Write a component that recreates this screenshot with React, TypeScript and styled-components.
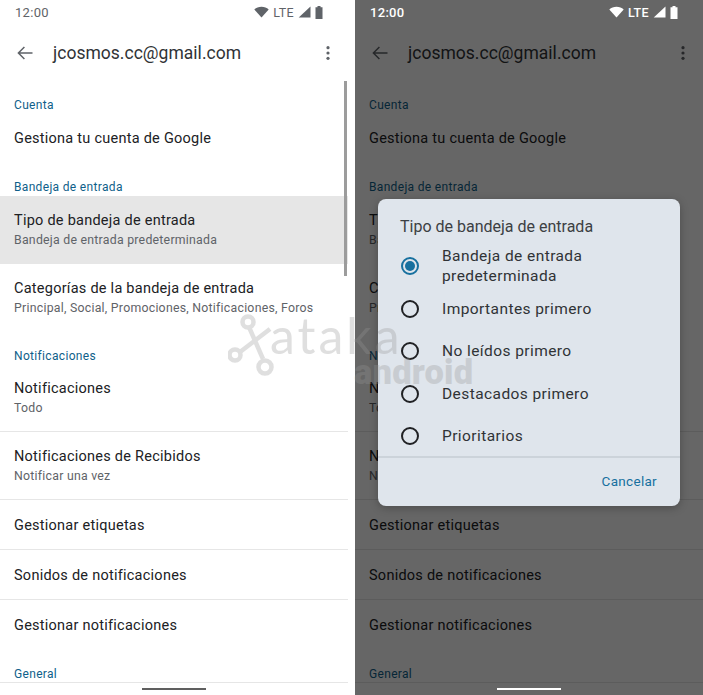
import React from 'react'
import styled, { createGlobalStyle } from 'styled-components'

const GlobalStyle = createGlobalStyle`
  html, body {
    margin: 0;
    padding: 0;
    background: #fff;
  }
  * {
    box-sizing: border-box;
  }
`

const options = [
  'Bandeja de entrada predeterminada',
  'Importantes primero',
  'No leídos primero',
  'Destacados primero',
  'Prioritarios',
]

const WifiIcon = () => (
  <svg width="15" height="12" viewBox="0 0 15 12" fill="currentColor">
    <path d="M7.5 11.5 0.3 3.4C2.2 1.7 4.7.7 7.5.7s5.3 1 7.2 2.7z" />
  </svg>
)

const SignalIcon = () => (
  <svg width="13" height="12" viewBox="0 0 13 12" fill="currentColor">
    <path d="M12.5.5v11H.7z" />
  </svg>
)

const BatteryIcon = () => (
  <svg width="8" height="13" viewBox="0 0 8 13" fill="currentColor">
    <path d="M2.5 0h3v1.2h2V13H.5V1.2h2z" />
  </svg>
)

const BackIcon = () => (
  <svg width="16" height="14" viewBox="0 0 16 14" fill="none" stroke="currentColor" strokeWidth="1.5">
    <path d="M15.5 7H1.6M7.4 1 1.4 7l6 6" />
  </svg>
)

const MoreIcon = () => (
  <svg width="4" height="14" viewBox="0 0 4 14" fill="currentColor">
    <circle cx="2" cy="1.7" r="1.6" />
    <circle cx="2" cy="7" r="1.6" />
    <circle cx="2" cy="12.3" r="1.6" />
  </svg>
)

const Settings = ({ dimmed }: { dimmed?: boolean }) => (
  <Screen>
    <StatusBar $dimmed={dimmed}>
      <Clock $dimmed={dimmed}>12:00</Clock>
      <StatusIcons>
        <WifiIcon />
        <Lte $dimmed={dimmed}>LTE</Lte>
        <SignalIcon />
        <BatteryIcon />
      </StatusIcons>
    </StatusBar>
    <Toolbar>
      <BackButton>
        <BackIcon />
      </BackButton>
      <Account>jcosmos.cc@gmail.com</Account>
      <MoreButton>
        <MoreIcon />
      </MoreButton>
    </Toolbar>
    <List>
      <SectionLabel>Cuenta</SectionLabel>
      <Row>
        <RowTitle>Gestiona tu cuenta de Google</RowTitle>
      </Row>
      <SectionLabel $bottom={1}>Bandeja de entrada</SectionLabel>
      <Row $tall $selected={!dimmed}>
        <RowTitle>Tipo de bandeja de entrada</RowTitle>
        <RowSubtitle>Bandeja de entrada predeterminada</RowSubtitle>
      </Row>
      <Row $tall>
        <RowTitle>Categorías de la bandeja de entrada</RowTitle>
        <RowSubtitle>Principal, Social, Promociones, Notificaciones, Foros</RowSubtitle>
      </Row>
      <SectionLabel>Notificaciones</SectionLabel>
      <Row $tall $divided>
        <RowTitle>Notificaciones</RowTitle>
        <RowSubtitle>Todo</RowSubtitle>
      </Row>
      <Row $tall $divided>
        <RowTitle>Notificaciones de Recibidos</RowTitle>
        <RowSubtitle>Notificar una vez</RowSubtitle>
      </Row>
      <Row $divided>
        <RowTitle>Gestionar etiquetas</RowTitle>
      </Row>
      <Row $divided>
        <RowTitle>Sonidos de notificaciones</RowTitle>
      </Row>
      <Row>
        <RowTitle>Gestionar notificaciones</RowTitle>
      </Row>
      <SectionLabel>General</SectionLabel>
    </List>
    <NavBar>
      <NavHandle $dimmed={dimmed} />
    </NavBar>
    {!dimmed && <ScrollThumb />}
    {dimmed && <Scrim />}
    {dimmed && (
      <Dialog>
        <DialogTitle>Tipo de bandeja de entrada</DialogTitle>
        {options.map((option, i) => (
          <Option key={option}>
            <Radio $checked={i === 0} />
            <OptionLabel>{option}</OptionLabel>
          </Option>
        ))}
        <DialogActions>
          <CancelButton>Cancelar</CancelButton>
        </DialogActions>
      </Dialog>
    )}
  </Screen>
)

export default function App() {
  return (
    <Page>
      <GlobalStyle />
      <Settings />
      <Settings dimmed />
      <Watermark>
        <svg width="50" height="64" viewBox="0 0 50 64" fill="none" stroke="#969696" strokeWidth="4.5">
          <path d="M21 13 35 45M12 38 42 15" />
          <circle cx="20" cy="8" r="5.5" fill="#fff" />
          <circle cx="7" cy="41" r="5.5" fill="#fff" />
          <circle cx="37" cy="53" r="6.5" fill="#fff" />
        </svg>
        <WatermarkName>ataka</WatermarkName>
        <WatermarkSub>android</WatermarkSub>
      </Watermark>
    </Page>
  )
}

const Page = styled.div`
  position: relative;
  width: 703px;
  height: 695px;
  overflow: hidden;
  display: flex;
  gap: 7px;
  font-family: Roboto, 'Liberation Sans', sans-serif;
  background: #fff;
`

const Screen = styled.div`
  position: relative;
  width: 348px;
  height: 695px;
  display: flex;
  flex-direction: column;
  overflow: hidden;
  background: #fff;
`

const StatusBar = styled.div<{ $dimmed?: boolean }>`
  position: relative;
  z-index: 2;
  height: 25px;
  flex: none;
  display: flex;
  align-items: center;
  justify-content: space-between;
  padding: 0 25px 1px 15px;
  color: ${p => (p.$dimmed ? '#fff' : '#5f6368')};
`

const Clock = styled.span<{ $dimmed?: boolean }>`
  font-size: 13px;
  letter-spacing: 0.3px;
  font-weight: ${p => (p.$dimmed ? 500 : 400)};
`

const StatusIcons = styled.div`
  display: flex;
  align-items: center;
  gap: 4px;
`

const Lte = styled.span<{ $dimmed?: boolean }>`
  font-size: 12.5px;
  letter-spacing: 0.4px;
  font-weight: ${p => (p.$dimmed ? 500 : 400)};
`

const Toolbar = styled.div`
  height: 56px;
  flex: none;
  display: flex;
  align-items: center;
  color: #5f6368;
`

const BackButton = styled.div`
  width: 53px;
  padding-left: 17px;
  display: flex;
  align-items: center;
`

const Account = styled.div`
  flex: 1;
  font-size: 17.5px;
  letter-spacing: 0.02px;
  color: #303336;
`

const MoreButton = styled.div`
  width: 22px;
  display: flex;
  align-items: center;
`

const List = styled.div`
  flex: 1;
  min-height: 0;
  overflow: hidden;
`

const SectionLabel = styled.div<{ $bottom?: number }>`
  margin: 14px 0 ${p => p.$bottom ?? 0}px;
  height: 18px;
  line-height: 18px;
  padding: 1px 0 0 14px;
  font-size: 12px;
  letter-spacing: 0.33px;
  color: #0f5f8a;
`

const Row = styled.div<{ $tall?: boolean; $selected?: boolean; $divided?: boolean }>`
  height: ${p => (p.$tall ? 68 : 50)}px;
  display: flex;
  flex-direction: column;
  justify-content: center;
  padding: ${p => (p.$divided ? 2 : 1)}px 14px 0;
  background: ${p => (p.$selected ? '#e6e6e6' : 'transparent')};
  border-bottom: ${p => (p.$divided ? '1px solid #e6e6e6' : 'none')};
`

const RowTitle = styled.div`
  font-size: 14.5px;
  line-height: 20px;
  letter-spacing: 0.25px;
  color: #202124;
`

const RowSubtitle = styled.div`
  font-size: 12.3px;
  line-height: 19px;
  letter-spacing: 0.25px;
  color: #5f6368;
`

const NavBar = styled.div`
  height: 13px;
  flex: none;
  display: flex;
  justify-content: center;
  padding-top: 5px;
  border-top: 1px solid #e6e6e6;
`

const NavHandle = styled.div<{ $dimmed?: boolean }>`
  position: relative;
  z-index: 2;
  width: 64px;
  height: 2px;
  background: ${p => (p.$dimmed ? '#fff' : '#5f5f5f')};
`

const ScrollThumb = styled.div`
  position: absolute;
  top: 81px;
  right: 1px;
  width: 3px;
  height: 195px;
  background: #9c9c9c;
`

const Scrim = styled.div`
  position: absolute;
  inset: 0;
  z-index: 1;
  background: rgba(0, 0, 0, 0.6);
`

const Dialog = styled.div`
  position: absolute;
  z-index: 3;
  top: 199px;
  left: 23px;
  width: 302px;
  height: 307px;
  display: flex;
  flex-direction: column;
  border-radius: 8px;
  background: #dfe5ec;
  box-shadow: 0 2px 8px rgba(0, 0, 0, 0.25);
`

const DialogTitle = styled.div`
  padding: 16px 22px 6px;
  font-size: 16px;
  line-height: 24px;
  color: #3c4043;
`

const Option = styled.div`
  height: 42px;
  flex: none;
  display: flex;
  align-items: center;
  padding-left: 23px;
  gap: 23px;
  &:nth-child(2) {
    height: 43px;
    padding-bottom: 1px;
  }
  &:nth-child(5),
  &:nth-child(6) {
    padding-top: 1px;
  }
`

const Radio = styled.span<{ $checked?: boolean }>`
  width: 18px;
  height: 18px;
  flex: none;
  border-radius: 50%;
  border: 2px solid ${p => (p.$checked ? '#17709f' : '#202124')};
  display: flex;
  align-items: center;
  justify-content: center;
  &::after {
    content: '';
    width: 10px;
    height: 10px;
    border-radius: 50%;
    background: ${p => (p.$checked ? '#17709f' : 'transparent')};
  }
`

const OptionLabel = styled.span`
  width: 170px;
  font-size: 15.5px;
  line-height: 20px;
  letter-spacing: 0.42px;
  color: #303336;
`

const DialogActions = styled.div`
  flex: 1;
  display: flex;
  align-items: center;
  justify-content: flex-end;
  padding: 0 23px 2px 0;
  border-top: 2px solid #ccd3da;
`

const CancelButton = styled.span`
  font-size: 13.5px;
  letter-spacing: 0.3px;
  color: #17709f;
`

const Watermark = styled.div`
  position: absolute;
  z-index: 5;
  top: 314px;
  left: 228px;
  width: 250px;
  height: 70px;
  opacity: 0.3;
  pointer-events: none;
  svg {
    display: block;
  }
`

const WatermarkName = styled.div`
  position: absolute;
  top: -12px;
  left: 42px;
  font-family: Lato, sans-serif;
  font-weight: 400;
  font-size: 50px;
  line-height: 66px;
  letter-spacing: 3px;
  color: #969696;
`

const WatermarkSub = styled.div`
  position: absolute;
  top: 44px;
  left: 126px;
  font-family: Roboto, sans-serif;
  font-weight: 900;
  font-size: 34.5px;
  line-height: 28px;
  letter-spacing: 0.2px;
  color: #969696;
`
